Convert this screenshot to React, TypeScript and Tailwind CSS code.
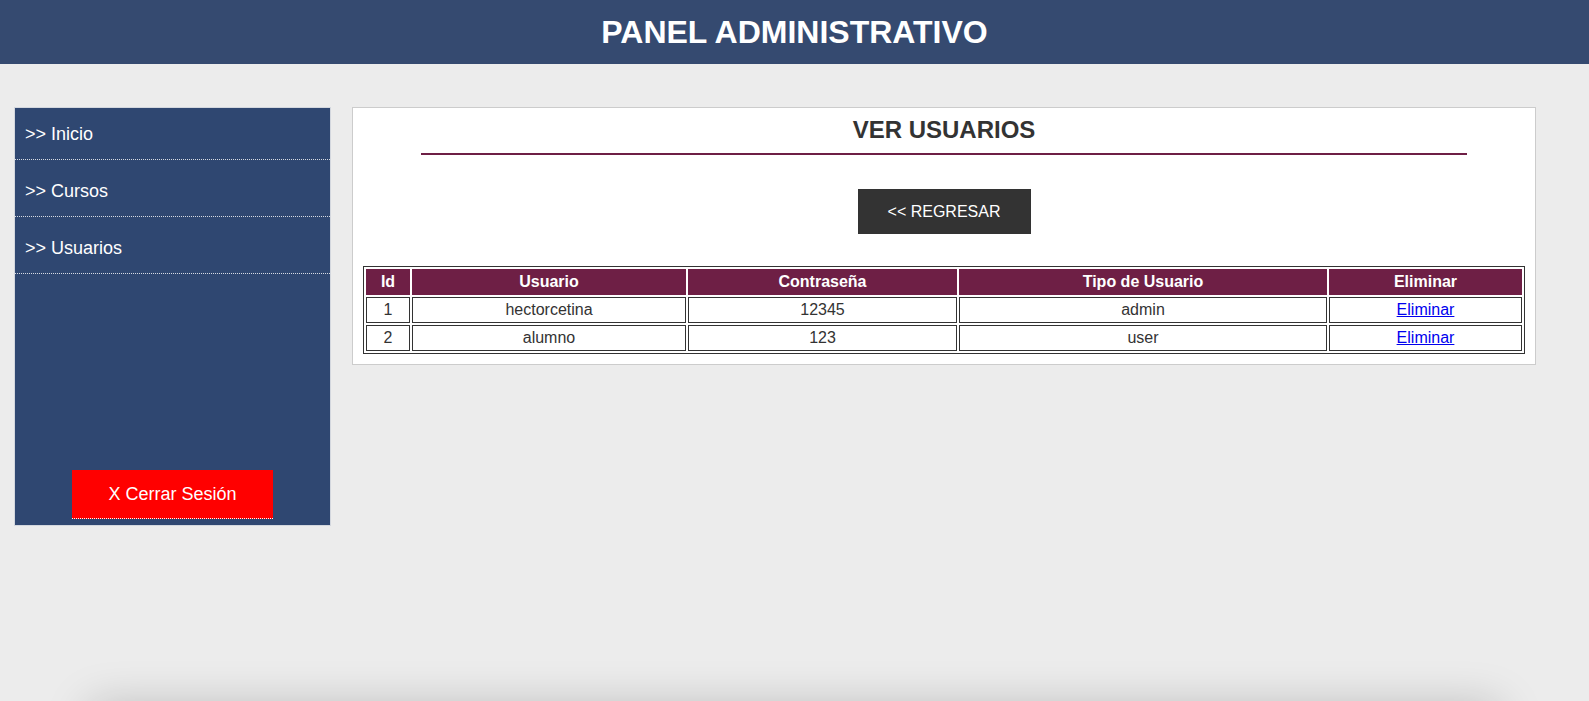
const MENU = [">> Inicio", ">> Cursos", ">> Usuarios"];

const USERS = [
  { id: 1, user: "hectorcetina", pass: "12345", type: "admin" },
  { id: 2, user: "alumno", pass: "123", type: "user" },
];

function Sidebar() {
  return (
    <aside className="flex h-[419px] w-[317px] shrink-0 flex-col border border-[#d3d7de] bg-[#2f4771]">
      <nav>
        {MENU.map((item, i) => (
          <a
            key={item}
            href="#"
            className={`block border-b border-dotted border-[#d6dae2] px-[10px] pb-[13px] text-[18px] leading-[24px] text-white ${
              i === 0 ? "pt-[14px]" : "pt-[19px]"
            }`}
          >
            {item}
          </a>
        ))}
      </nav>
      <a
        href="#"
        className="mx-auto mt-auto mb-[6px] flex h-[49px] w-[201px] items-center justify-center border-b border-dotted border-white bg-[#ff0000] text-[18px] text-white"
      >
        X Cerrar Sesión
      </a>
    </aside>
  );
}

function UsersPanel() {
  const th = "border border-[#6e1f45] bg-[#6e1f45] py-[3px] text-[16px] leading-[18px] font-bold text-white";
  const td = "border border-[#333] py-[3px] text-center text-[16px] leading-[18px] text-[#333]";
  return (
    <section className="h-fit w-[1184px] border border-[#cccccc] bg-white px-[10px] pt-[8px] pb-[10px]">
      <h2 className="text-center text-[24px] leading-[28px] font-bold text-[#333]">VER USUARIOS</h2>
      <div className="mx-auto mt-[9px] h-[2px] w-[1046px] bg-[#6e1f45]" />
      <a
        href="#"
        className="mx-auto mt-[34px] flex h-[45px] w-[173px] items-center justify-center bg-[#333333] text-[16px] text-white"
      >
        {"<< REGRESAR"}
      </a>
      <table className="mt-[32px] w-full table-fixed border-separate border-spacing-[2px] border border-[#333]">
        <thead>
          <tr>
            <th className={`${th} w-[44px]`}>Id</th>
            <th className={`${th} w-[274px]`}>Usuario</th>
            <th className={`${th} w-[269px]`}>Contraseña</th>
            <th className={`${th} w-[368px]`}>Tipo de Usuario</th>
            <th className={th}>Eliminar</th>
          </tr>
        </thead>
        <tbody>
          {USERS.map((u) => (
            <tr key={u.id}>
              <td className={td}>{u.id}</td>
              <td className={td}>{u.user}</td>
              <td className={td}>{u.pass}</td>
              <td className={td}>{u.type}</td>
              <td className={td}>
                <a href="#" className="text-[#0000ee] underline">
                  Eliminar
                </a>
              </td>
            </tr>
          ))}
        </tbody>
      </table>
    </section>
  );
}

export default function App() {
  return (
    <div className="h-[701px] overflow-hidden bg-[#ececec] font-['Liberation_Sans',Arial,sans-serif]">
      <header className="flex h-[64px] items-center justify-center bg-[#354a70]">
        <h1 className="text-[32px] font-bold text-white">PANEL ADMINISTRATIVO</h1>
      </header>
      <div className="mt-[43px] flex items-start gap-[21px] pl-[14px]">
        <Sidebar />
        <UsersPanel />
      </div>
      <footer className="mx-[90px] mt-[180px] h-[40px] bg-[#ececec] shadow-[0_0_45px_rgba(0,0,0,0.22)]" />
    </div>
  );
}
